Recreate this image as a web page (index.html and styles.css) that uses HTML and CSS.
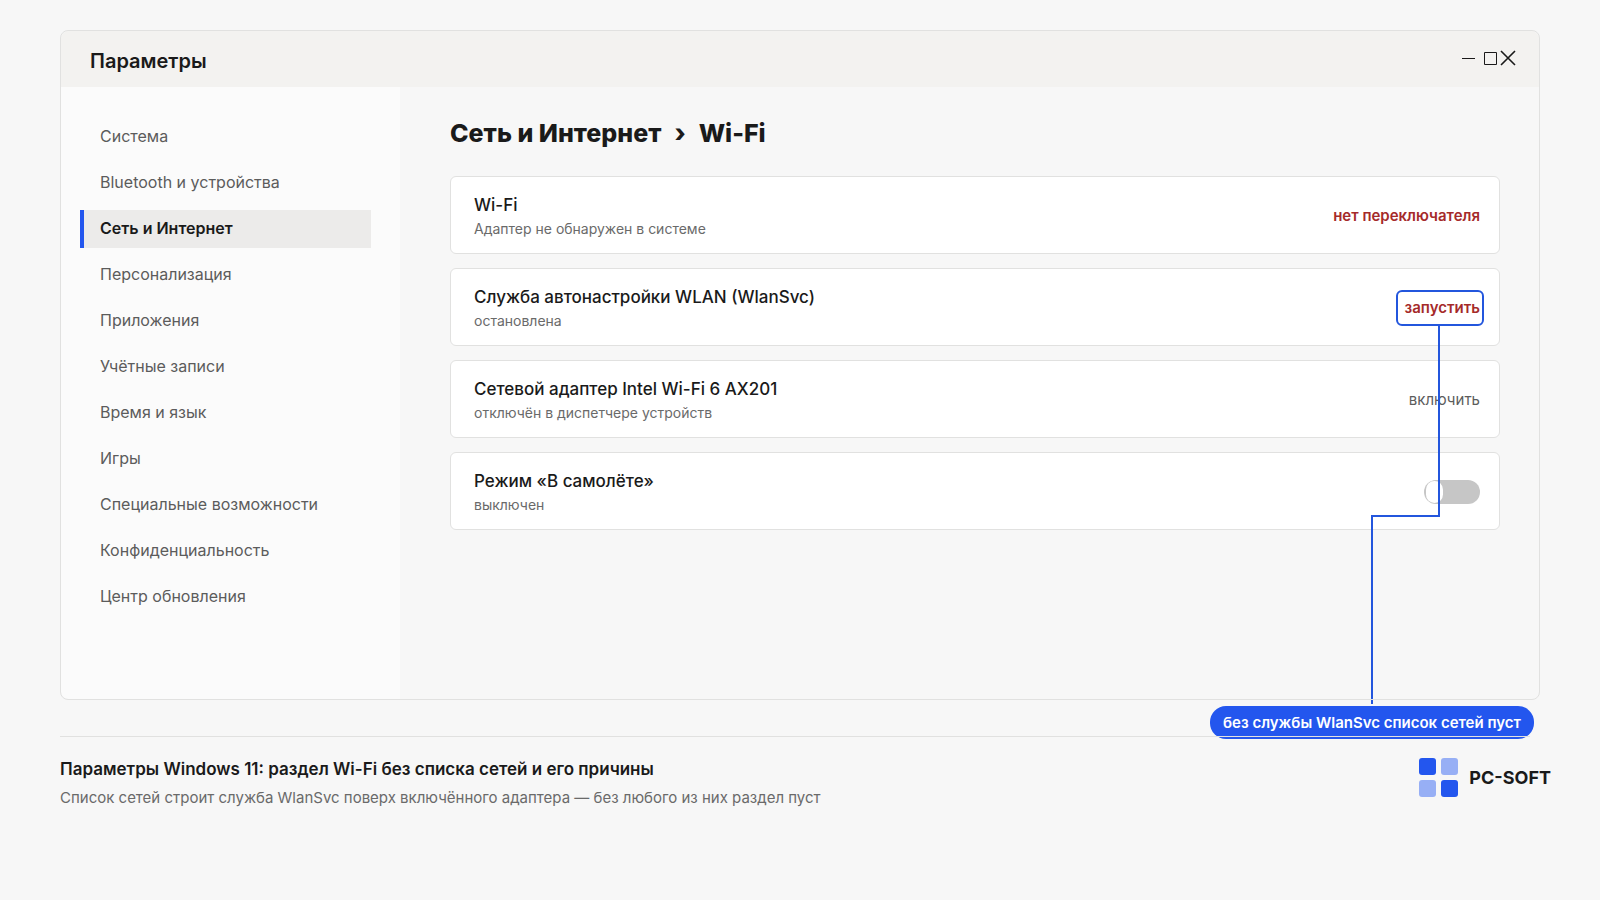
FILE: index.html
```html
<!DOCTYPE html>
<html lang="ru">
  <head>
    <meta charset="utf-8" />
    <meta name="viewport" content="width=device-width, initial-scale=1.0" />
    <title>Параметры Windows 11: Wi-Fi</title>
    <link rel="stylesheet" href="styles.css">
  </head>
  <body>
    <section class="window">
      <header class="titlebar">
        <h1>Параметры</h1>
        <div class="controls">
          <button type="button" aria-label="Свернуть">
            <svg width="16" height="16" viewBox="0 0 16 16"><path d="M2 8.5h13" /></svg>
          </button>
          <button type="button" aria-label="Развернуть">
            <svg width="16" height="16" viewBox="0 0 16 16"><path d="M3.5 2.5h12v12h-12z" /></svg>
          </button>
          <button type="button" aria-label="Закрыть">
            <svg class="close" width="16" height="16" viewBox="0 0 16 16"><path d="M1 1l14 14M15 1l-14 14" /></svg>
          </button>
        </div>
      </header>

      <div class="content">
        <nav class="sidebar">
          <a href="#">Система</a>
          <a href="#">Bluetooth и устройства</a>
          <a href="#" class="active">Сеть и Интернет</a>
          <a href="#">Персонализация</a>
          <a href="#">Приложения</a>
          <a href="#">Учётные записи</a>
          <a href="#">Время и язык</a>
          <a href="#">Игры</a>
          <a href="#">Специальные возможности</a>
          <a href="#">Конфиденциальность</a>
          <a href="#">Центр обновления</a>
        </nav>

        <main>
          <h2><span>Сеть и Интернет</span><span>›</span><span>Wi-Fi</span></h2>

          <div class="card">
            <div class="info">
              <h3>Wi-Fi</h3>
              <p>Адаптер не обнаружен в системе</p>
            </div>
            <span class="status error">нет переключателя</span>
          </div>

          <div class="card">
            <div class="info">
              <h3>Служба автонастройки WLAN (WlanSvc)</h3>
              <p>остановлена</p>
            </div>
            <button type="button" class="status error start">запустить</button>
            <svg class="connector" width="70" height="380" viewBox="0 0 70 380">
              <path d="M68 0v190H1v188" />
            </svg>
            <div class="callout">без службы WlanSvc список сетей пуст</div>
          </div>

          <div class="card">
            <div class="info">
              <h3>Сетевой адаптер Intel Wi-Fi 6 AX201</h3>
              <p>отключён в диспетчере устройств</p>
            </div>
            <button type="button" class="status">включить</button>
          </div>

          <div class="card">
            <div class="info">
              <h3><label for="airplane">Режим «В самолёте»</label></h3>
              <p>выключен</p>
            </div>
            <input type="checkbox" id="airplane" class="toggle" />
          </div>
        </main>
      </div>
    </section>

    <footer>
      <div class="caption">
        <h4>Параметры Windows 11: раздел Wi-Fi без списка сетей и его причины</h4>
        <p>Список сетей строит служба WlanSvc поверх включённого адаптера — без любого из них раздел пуст</p>
      </div>
      <div class="logo">
        <svg width="39" height="39" viewBox="0 0 39 39">
          <rect width="17" height="17" rx="3" />
          <rect class="light" x="22" width="17" height="17" rx="3" />
          <rect class="light" y="22" width="17" height="17" rx="3" />
          <rect x="22" y="22" width="17" height="17" rx="3" />
        </svg>
        <span>PC-SOFT</span>
      </div>
    </footer>
  </body>
</html>
```
FILE: styles.css
```css
* {
  box-sizing: border-box;
}

body {
  margin: 0;
  padding: 30px 60px;
  background: #f7f7f7;
  color: #1a1a1a;
  font-family: Inter, "Noto Sans", sans-serif;
}

h1,
h2,
h3,
h4,
p {
  margin: 0;
}

button {
  padding: 0;
  border: none;
  background: none;
  font-family: inherit;
  color: inherit;
}

.window {
  position: relative;
  padding: 1px;
}

/* the frame is drawn above the connector */
.window::after {
  content: "";
  position: absolute;
  inset: 0;
  z-index: 3;
  border: 1px solid #e1e1e0;
  border-radius: 8px;
  pointer-events: none;
}

.titlebar {
  display: flex;
  justify-content: space-between;
  align-items: center;
  height: 56px;
  padding: 4px 23px 0 29px;
  border-radius: 8px 8px 0 0;
  background: #f3f2f0;
}

.titlebar h1 {
  font-size: 20px;
  line-height: 28px;
  font-weight: 600;
}

.controls {
  display: flex;
  gap: 3px;
  padding-bottom: 6px;
}

.controls button {
  display: flex;
}

.controls button:first-child {
  margin-right: 2px;
}

.controls svg {
  fill: none;
  stroke: #1a1a1a;
  stroke-width: 1;
}

.controls .close {
  stroke-width: 1.6;
}

.content {
  display: flex;
}

.sidebar {
  display: flex;
  flex-direction: column;
  gap: 8px;
  width: 339px;
  padding: 31px 29px 83px 19px;
  border-radius: 0 0 0 8px;
  background: #fbfbfb;
}

.sidebar a {
  padding: 0 0 2px 16px;
  border-left: 4px solid transparent;
  font-size: 16px;
  line-height: 36px;
  color: #5c5c5c;
  text-decoration: none;
}

.sidebar .active {
  border-color: #2356ee;
  background: #ecebea;
  color: #1a1a1a;
  font-weight: 600;
}

main {
  flex: 1;
  display: flex;
  flex-direction: column;
  gap: 14px;
  padding: 28px 39px 0 50px;
}

main h2 {
  display: flex;
  gap: 13px;
  margin-bottom: 11px;
  font-size: 25px;
  line-height: 36px;
  font-weight: 800;
}

.card {
  position: relative;
  display: flex;
  justify-content: space-between;
  align-items: center;
  height: 78px;
  padding: 2px 19px 0 23px;
  border: 1px solid #e1e1e0;
  border-radius: 6px;
  background: #fff;
}

.card h3 {
  font-size: 17px;
  line-height: 26px;
  font-weight: 500;
}

.card p {
  font-size: 14px;
  line-height: 22px;
  color: #6a6a6a;
}

.status {
  font-size: 15px;
  line-height: 20px;
  color: #5c5c5c;
}

.error {
  color: #a52a2a;
  font-weight: 600;
}

.start {
  height: 36px;
  margin-right: -4px;
  padding: 0 2px 0 7px;
  border: 2px solid #2356dd;
  border-radius: 6px;
}

.connector {
  position: absolute;
  top: 57px;
  right: 58px;
  z-index: 2;
  fill: none;
  stroke: #2356dd;
  stroke-width: 2;
  pointer-events: none;
}

.callout {
  position: absolute;
  top: 437px;
  right: -35px;
  z-index: 2;
  padding: 0 13px;
  border-radius: 16px;
  background: #2356ee;
  color: #fff;
  font-size: 15px;
  line-height: 33px;
  font-weight: 600;
  white-space: nowrap;
}

.toggle {
  appearance: none;
  display: flex;
  width: 56px;
  height: 24px;
  margin: 0;
  padding: 1px 2px;
  border-radius: 12px;
  background: #c6c6c6;
}

.toggle::before {
  content: "";
  width: 17px;
  border-radius: 9px;
  background: #fff;
}

.toggle:checked {
  justify-content: flex-end;
  background: #2356ee;
}

footer {
  position: relative;
  z-index: 4;
  display: flex;
  justify-content: space-between;
  align-items: flex-start;
  margin: 36px 10px 0 0;
  padding-top: 18px;
  border-top: 1px solid #e1e1e0;
}

.caption h4 {
  font-size: 17px;
  line-height: 28px;
  font-weight: 600;
}

.caption p {
  margin-top: 2px;
  font-size: 15px;
  line-height: 26px;
  color: #6a6a6a;
}

.logo {
  display: flex;
  align-items: center;
  gap: 11px;
  margin: 3px -21px 0 0;
  font-size: 18px;
  font-weight: 700;
}

.logo svg {
  fill: #2356ee;
}

.logo .light {
  fill: #97aff5;
}
```
